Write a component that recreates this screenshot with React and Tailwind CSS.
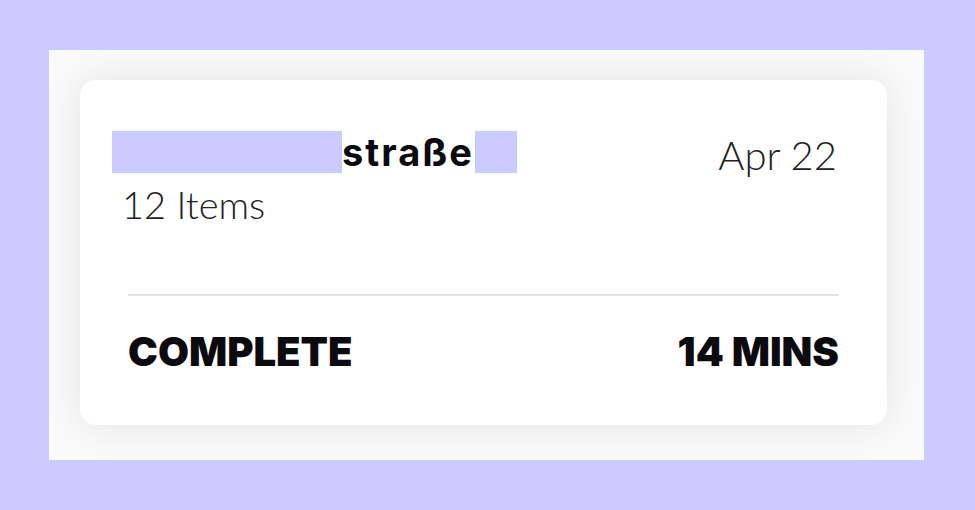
export default function App() {
  return (
    <div className="h-[510px] w-[975px] bg-[#cbcbff] pt-[50px] pl-[49px] font-['Lato','Liberation_Sans',sans-serif]">
      <div className="w-[875px] h-[410px] bg-[#fafafa] pt-[30px] pl-[31px]">
        <div className="w-[807px] h-[345px] bg-white rounded-[16px] shadow-[0_0_40px_rgba(0,0,0,0.09)]">
          <div className="flex justify-between items-start pt-[51px] pl-[32px] pr-[50px] h-[214px]">
            <div>
              <div className="flex items-center h-[42px]">
                <span className="block w-[230px] h-[42px] bg-[#cbcbff]" />
                <span className="font-['Inter','Lato',sans-serif] text-[38px] leading-none font-bold text-[#0a0a0f] tracking-[2px]">straße</span>
                <span className="block w-[42px] h-[42px] ml-[1px] bg-[#cbcbff]" />
              </div>
              <div className="ml-[10px] mt-[12px] text-[38px] leading-none font-light text-[#222226]">12 Items</div>
            </div>
            <div className="mt-[4px] text-[40px] leading-none font-light text-[#222226]">Apr 22</div>
          </div>
          <div className="mx-[48px] border-t-2 border-[#e3e3e3]" />
          <div className="flex justify-between items-center px-[48px] pt-[36px] font-['Inter','Lato',sans-serif] text-[40px] leading-none font-black text-[#0a0a0f]">
            <span>COMPLETE</span>
            <span>14 MINS</span>
          </div>
        </div>
      </div>
    </div>
  );
}
